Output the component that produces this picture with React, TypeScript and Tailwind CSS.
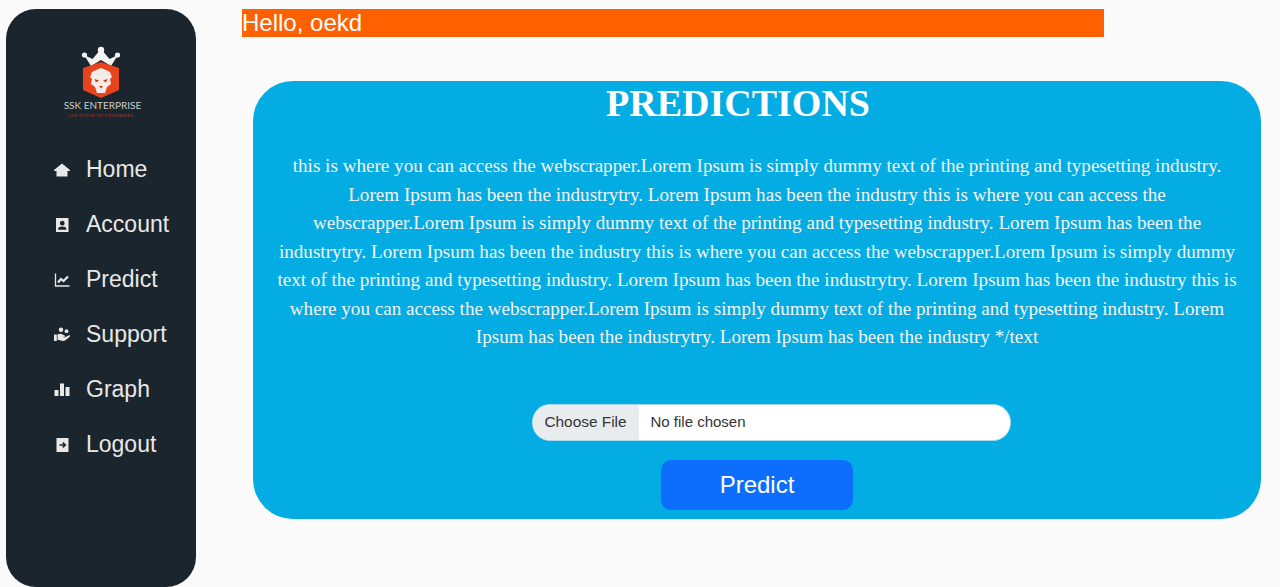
import type { ReactNode } from "react";

const navItems: { label: string; icon: ReactNode }[] = [
  {
    label: "Home",
    icon: <path d="M8 1.5 L16 8 V9 H13.5 V14.5 H2.5 V9 H0 V8 Z" fill="currentColor" />,
  },
  {
    label: "Account",
    icon: (
      <path
        fillRule="evenodd"
        d="M2 1 H14.5 V15 H2 Z M8.2 3.8 A2.4 2.4 0 1 0 8.3 8.6 A2.4 2.4 0 1 0 8.2 3.8 Z M4.2 12.8 H12.3 V11.6 C12.3 10.2 10.6 9.4 8.25 9.4 C5.9 9.4 4.2 10.2 4.2 11.6 Z"
        fill="currentColor"
      />
    ),
  },
  {
    label: "Predict",
    icon: (
      <g fill="none" stroke="currentColor">
        <path d="M1.5 1.5 V14 H15.5" strokeWidth="1.3" />
        <path d="M4 10.5 L7 7 L9.5 9 L14 4.5" strokeWidth="2.2" />
      </g>
    ),
  },
  {
    label: "Support",
    icon: (
      <g fill="currentColor">
        <circle cx="7" cy="2.8" r="2.2" />
        <circle cx="12.5" cy="4.2" r="1.9" />
        <rect x="0" y="7.5" width="2.8" height="6.5" />
        <path d="M3.5 7.6 C5 6.4 7 6.6 8.5 7.6 L10.5 8.4 C11.5 8.9 11 10.1 10 9.9 L8 9.6 L10.5 10.4 L15 8.2 C16.2 7.9 16.7 9.1 15.8 9.8 L11 13.6 C10 14.2 9 14.2 8 13.8 L3.5 12.8 Z" />
      </g>
    ),
  },
  {
    label: "Graph",
    icon: (
      <g fill="currentColor">
        <rect x="0.5" y="8" width="4" height="6" />
        <rect x="6" y="1.5" width="4" height="12.5" />
        <rect x="11.5" y="5" width="4" height="9" />
      </g>
    ),
  },
  {
    label: "Logout",
    icon: (
      <g>
        <rect x="2.5" y="1" width="12" height="14" fill="currentColor" />
        <path d="M5.5 8 H11 M8.8 5.6 L11.3 8 L8.8 10.4" fill="none" stroke="#1a252d" strokeWidth="1.5" />
      </g>
    ),
  },
];

const text =
  "this is where you can access the webscrapper.Lorem Ipsum is simply dummy text of the printing and typesetting industry. Lorem Ipsum has been the industrytry. Lorem Ipsum has been the industry this is where you can access the webscrapper.Lorem Ipsum is simply dummy text of the printing and typesetting industry. Lorem Ipsum has been the industrytry. Lorem Ipsum has been the industry this is where you can access the webscrapper.Lorem Ipsum is simply dummy text of the printing and typesetting industry. Lorem Ipsum has been the industrytry. Lorem Ipsum has been the industry this is where you can access the webscrapper.Lorem Ipsum is simply dummy text of the printing and typesetting industry. Lorem Ipsum has been the industrytry. Lorem Ipsum has been the industry */text";

function Logo() {
  return (
    <div className="flex flex-col items-center">
      <svg width="40" height="52" viewBox="0 0 40 52">
        {/* crown */}
        <g fill="#f4f4f4">
          <circle cx="20" cy="4" r="3.2" />
          <circle cx="3.5" cy="9" r="2.6" />
          <circle cx="36.5" cy="9" r="2.6" />
        </g>
        <path d="M3 9 L11.5 13 L20 3 L28.5 13 L37 9 L30 20 L20 14 L10 20 Z" fill="#f4f4f4" />
        {/* badge */}
        <path d="M20 16 L38 22 V44 L20 52 L2 44 V22 Z" fill="#e8431f" />
        <path d="M20 22 L25 24 L29 26 L31 31 L29 33 L30 38 L26 41 L24 47 H16 L14 41 L10 38 L11 33 L9 31 L11 26 L15 24 Z" fill="#f6ece6" />
        <path d="M13.5 33 L18 34.5 L15 36.5 Z M26.5 33 L22 34.5 L25 36.5 Z M18 40 H22 L20 42.5 Z" fill="#c9381a" />
      </svg>
      <p className="mt-[2px] pl-[3px] font-['Lato',sans-serif] text-[10px] leading-[11px] text-[#c9cdd0]">SSK ENTERPRISE</p>
      <p className="mt-[2px] font-['Lato',sans-serif] text-[4.5px] leading-[6px] tracking-[0.3px] text-[#b3342a]">SSK STOCK TO COMPANIES</p>
    </div>
  );
}

export default function App() {
  return (
    <div className="flex h-[587px] w-[1280px] overflow-hidden bg-[#fafafa] font-['Liberation_Sans',sans-serif]">
      <aside className="mt-[9px] ml-[6px] h-[578px] w-[190px] shrink-0 rounded-[30px] bg-[#1a252d] pt-[37px]">
        <Logo />
        <nav className="mt-[36px] flex flex-col gap-[26px] pl-[48px]">
          {navItems.map((item) => (
            <div key={item.label} className="flex h-[29px] items-center text-[#e8e8e8]">
              <svg width="16" height="16" viewBox="0 0 16 16" className="mr-[16px] shrink-0">
                {item.icon}
              </svg>
              <span className="text-[23px] leading-[29px]">{item.label}</span>
            </div>
          ))}
        </nav>
      </aside>
      <main className="flex-1 pt-[9px] pl-[46px]">
        <div className="h-[28px] w-[862px] bg-[#ff6100] text-[24px] leading-[28px] text-white">Hello, oekd</div>
        <section className="mt-[44px] ml-[11px] flex h-[438px] w-[1008px] flex-col items-center rounded-[40px] bg-[#03ace2] px-[20px] font-['Liberation_Serif',serif] text-white">
          <h1 className="mr-[38px] text-[38px] leading-[45px] font-bold">PREDICTIONS</h1>
          <p className="mt-[26px] text-center text-[19.12px] leading-[28.5px] text-[#f4f4f4]">{text}</p>
          <div className="mt-[52px] ml-[28px] flex h-[37px] w-[479px] overflow-hidden rounded-[18px] border border-[#a9d7e8] bg-white font-['Liberation_Sans',sans-serif] text-[#333]">
            <span className="flex w-[106px] items-center justify-center bg-[#e9ecef] text-[15.4px]">Choose File</span>
            <span className="flex items-center pl-[12px] text-[15px]">No file chosen</span>
          </div>
          <button className="mt-[19px] h-[50px] w-[192px] rounded-[10px] bg-[#0d6efd] font-['Liberation_Sans',sans-serif] text-[24px] text-white">Predict</button>
        </section>
      </main>
    </div>
  );
}
